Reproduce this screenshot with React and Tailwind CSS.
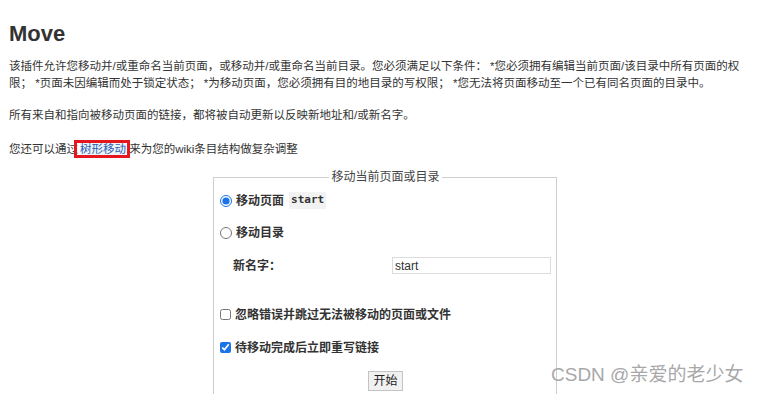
export default function App() {
  const font = { fontFamily: '"Liberation Sans", Arial, "Noto Sans CJK SC", sans-serif' };
  return (
    <div
      className="relative h-[394px] w-[757px] overflow-hidden bg-white px-[9px] text-[#333]"
      style={font}
    >
      <h1 className="pt-[21px] text-[22px] font-bold leading-[26px] text-[#333]">Move</h1>

      <p className="mt-[11px] text-[11.5px] leading-[17px]">
        该插件允许您移动并/或重命名当前页面，或移动并/或重命名当前目录。您必须满足以下条件： *您必须拥有编辑当前页面/该目录中所有页面的权限； *页面未因编辑而处于锁定状态； *为移动页面，您必须拥有目的地目录的写权限； *您无法将页面移动至一个已有同名页面的目录中。
      </p>

      <p className="mt-[15px] text-[11.5px] leading-[17px]">
        所有来自和指向被移动页面的链接，都将被自动更新以反映新地址和/或新名字。
      </p>

      <p className="mt-[17px] text-[11.5px] leading-[17px]">
        您还可以通过
        <span className="relative ml-[2px]">
          <a className="bg-[#eef4fb] text-[#2a5db0]">树形移动</a>
          <span className="absolute -left-[6px] -right-[4px] -top-[3px] -bottom-[3px] border-[3px] border-[#e5161d]" />
        </span>
        .来为您的wiki条目结构做复杂调整
      </p>

      <fieldset className="ml-[204px] mt-[12px] w-[344px] min-w-0 border border-[#cfcfcf] pb-[20px] pl-[6px] pr-[5px]">
        <legend className="mx-auto px-[2px] text-[12px] leading-[14px] text-[#444]">移动当前页面或目录</legend>

        <label className="mt-[8px] flex h-[17px] items-center gap-[4px] text-[12px] font-bold">
          <input type="radio" name="t" defaultChecked className="m-0 h-[12px] w-[12px] accent-[#1a73e8]" />
          移动页面
          <code
            className="ml-[1px] bg-[#f2f2f2] px-[2px] text-[11px] font-bold"
            style={{ fontFamily: '"DejaVu Sans Mono", monospace' }}
          >
            start
          </code>
        </label>

        <label className="mt-[15px] flex h-[17px] items-center gap-[4px] text-[12px] font-bold">
          <input type="radio" name="t" className="m-0 h-[12px] w-[12px]" />
          移动目录
        </label>

        <div className="mt-[16px] flex h-[17px] items-center">
          <span className="ml-[13px] w-[159px] text-[12px] font-bold">新名字：</span>
          <input
            defaultValue="start"
            className="h-[17px] w-[159px] border border-[#dcdcdc] px-[2px] text-[12px] text-[#333] outline-none"
            style={font}
          />
        </div>

        <label className="mt-[32px] flex h-[17px] items-center gap-[4px] text-[12px] font-bold">
          <input type="checkbox" className="m-0 h-[11px] w-[11px]" />
          忽略错误并跳过无法被移动的页面或文件
        </label>

        <label className="mt-[16px] flex h-[17px] items-center gap-[4px] text-[12px] font-bold">
          <input type="checkbox" defaultChecked className="m-0 h-[11px] w-[11px] accent-[#1a73e8]" />
          待移动完成后立即重写链接
        </label>

        <div className="mt-[15px] flex justify-center">
          <button
            className="h-[20px] border border-[#c4c4c4] bg-[#f1f1f1] px-[4px] text-[12px] leading-[18px] text-[#222]"
            style={font}
          >
            开始
          </button>
        </div>
      </fieldset>

      <div className="absolute left-[551px] top-[363px] text-[19px] leading-[24px] text-[#a8a8a8]">
        CSDN @亲爱的老少女
      </div>
    </div>
  );
}
